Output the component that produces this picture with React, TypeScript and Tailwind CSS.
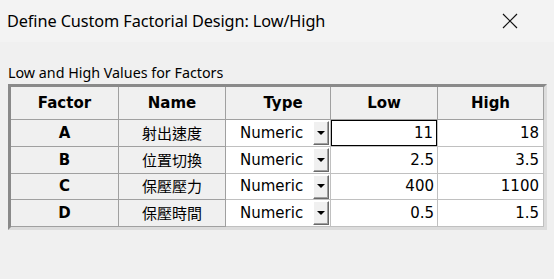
import React from 'react';

const rows = [
  { factor: 'A', name: '射出速度', low: '11', high: '18' },
  { factor: 'B', name: '位置切換', low: '2.5', high: '3.5' },
  { factor: 'C', name: '保壓壓力', low: '400', high: '1100' },
  { factor: 'D', name: '保壓時間', low: '0.5', high: '1.5' },
];

const cols = 'grid grid-cols-[108px_107px_105px_107px_106px]';
const tahoma = { fontFamily: 'Tahoma, "DejaVu Sans", sans-serif' };

function DropButton() {
  return (
    <div className="w-[16px] h-[24px] bg-[#f0f0f0] border-t border-l border-t-white border-l-white border-r border-b border-r-[#696969] border-b-[#696969] flex items-center justify-center shadow-[inset_-1px_-1px_0_#a0a0a0]">
      <svg width="8" height="5" viewBox="0 0 8 5">
        <path d="M0 0 H8 L4 4 Z" fill="#000" />
      </svg>
    </div>
  );
}

export default function App() {
  return (
    <div className="w-[554px] h-[279px] bg-[#f0f0f0] overflow-hidden text-black">
      <div className="h-[42px] flex items-center justify-between pl-[7px] pr-[36px] bg-[#f3f3f3]">
        <span className="text-[16.3px] tracking-[-0.1px]" style={{ fontFamily: '"Noto Sans", sans-serif' }}>
          Define Custom Factorial Design: Low/High
        </span>
        <svg width="16" height="16" viewBox="0 0 16 16">
          <path d="M1 1 L15 15 M15 1 L1 15" stroke="#111" strokeWidth="1.2" />
        </svg>
      </div>

      <div className="pl-[8px] h-[42px] flex flex-col justify-end pb-[2px]">
        <span className="text-[14.3px] leading-[18px]" style={{ fontFamily: '"Noto Sans", sans-serif' }}>
          Low and High Values for Factors
        </span>
      </div>

      <div className="ml-[8px] w-[539px] border-t-[3px] border-l-[3px] border-t-[#8a8a8a] border-l-[#8a8a8a] border-r-[3px] border-b-[3px] border-r-[#dcdcdc] border-b-[#dcdcdc]" style={tahoma}>
        <div className={`${cols} h-[33px] text-[15px] font-bold`}>
          {['Factor', 'Name', 'Type', 'Low', 'High'].map((h, i) => (
            <div key={h} className={`flex items-center justify-center border-b border-r border-[#a0a0a0] bg-[#f0f0f0] ${i === 2 ? 'pl-[10px]' : ''}`}>
              {h}
            </div>
          ))}
        </div>
        {rows.map((r, idx) => (
          <div key={r.factor} className={`${cols} ${idx === 2 ? 'h-[26px]' : 'h-[27px]'} text-[15px]`}>
            <div className="flex items-center justify-center font-bold border-b border-r border-[#a0a0a0] bg-[#f0f0f0]">{r.factor}</div>
            <div className="flex items-center justify-center border-b border-r border-[#a0a0a0] bg-[#f0f0f0] text-[15px]" style={{ fontFamily: '"Noto Sans CJK TC", sans-serif' }}>
              {r.name}
            </div>
            <div className="flex items-center justify-between pl-[14px] pr-[1px] border-b border-r border-[#c0c0c0] bg-white">
              <span>Numeric</span>
              <DropButton />
            </div>
            <div className="p-0 border-b border-r border-[#c0c0c0] bg-white">
              <div className={`h-full flex items-center justify-end pr-[3px] ${idx === 0 ? 'border border-black' : ''}`}>
                {r.low}
              </div>
            </div>
            <div className="flex items-center justify-end pr-[4px] border-b border-r border-[#c0c0c0] bg-white">{r.high}</div>
          </div>
        ))}
      </div>
    </div>
  );
}
